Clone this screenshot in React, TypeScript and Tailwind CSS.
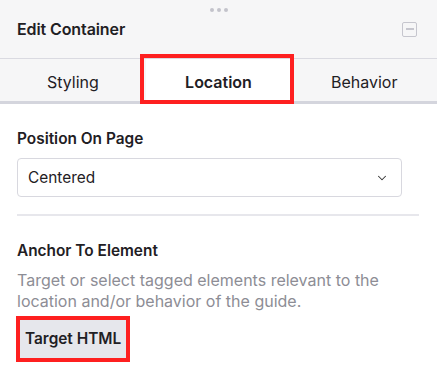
import { ChevronDown } from "lucide-react";

const tabs = ["Styling", "Location", "Behavior"];

export default function App() {
  const active = "Location";

  return (
    <div className="w-[437px] h-[374px] overflow-hidden bg-white text-[#1f2024] font-['Inter',sans-serif]">
      {/* Header */}
      <div className="relative flex h-[59px] items-center justify-between border-b border-[#dadae1] bg-[#f6f6f7] pl-[17px] pr-[20px]">
        <div className="absolute left-1/2 top-[8px] flex -translate-x-1/2 gap-[3px]">
          <span className="h-[4px] w-[4px] rounded-full bg-[#c3c3cb]" />
          <span className="h-[4px] w-[4px] rounded-full bg-[#c3c3cb]" />
          <span className="h-[4px] w-[4px] rounded-full bg-[#c3c3cb]" />
        </div>
        <h2 className="text-[16px] font-semibold tracking-[-0.1px]">Edit Container</h2>
        <span className="flex h-[15px] w-[15px] items-center justify-center rounded-[2px] border border-[#c6c6ce]">
          <span className="h-[1.5px] w-[8px] bg-[#c6c6ce]" />
        </span>
      </div>

      {/* Tabs */}
      <div className="grid h-[45px] grid-cols-3">
        {tabs.map((t) =>
          t === active ? (
            <div key={t} className="relative flex items-center justify-center bg-white text-[16px] font-semibold">
              {t}
              <span className="pointer-events-none absolute -left-[6px] -right-[3px] -top-[5px] bottom-0 border-4 border-[#fe2020]" />
            </div>
          ) : (
            <div key={t} className="flex items-center justify-center border-b-[3px] border-[#d4d5dd] bg-[#f6f6f7] pt-[3px] text-[16px]">
              {t}
            </div>
          )
        )}
      </div>

      {/* Body */}
      <div className="px-[17px] pt-[25px]">
        <p className="text-[15.4px] font-semibold leading-[20px]">Position On Page</p>
        <button className="mt-[9px] flex h-[39px] w-[385px] items-center justify-between rounded-[4px] border border-[#d8d8df] bg-white pl-[10px] pr-[12px] text-[15.4px]">
          Centered
          <ChevronDown size={14} strokeWidth={1.75} className="text-[#333]" />
        </button>
        <div className="mt-[17px] h-[2px] w-[402px] bg-[#e7e7ec]" />

        <p className="mt-[25px] text-[15.4px] font-semibold leading-[20px]">Anchor To Element</p>
        <p className="mt-[9px] text-[16px] leading-[21px] text-[#8d8d95]">
          Target or select tagged elements relevant to the location and/or behavior of the guide.
        </p>
        <button className="mt-[4px] -ml-[1px] border-4 border-[#fe2020] bg-[#e6e7ec] px-[5px] py-[7px] text-[15.4px] font-semibold leading-[24px]">
          Target HTML
        </button>
      </div>
    </div>
  );
}
